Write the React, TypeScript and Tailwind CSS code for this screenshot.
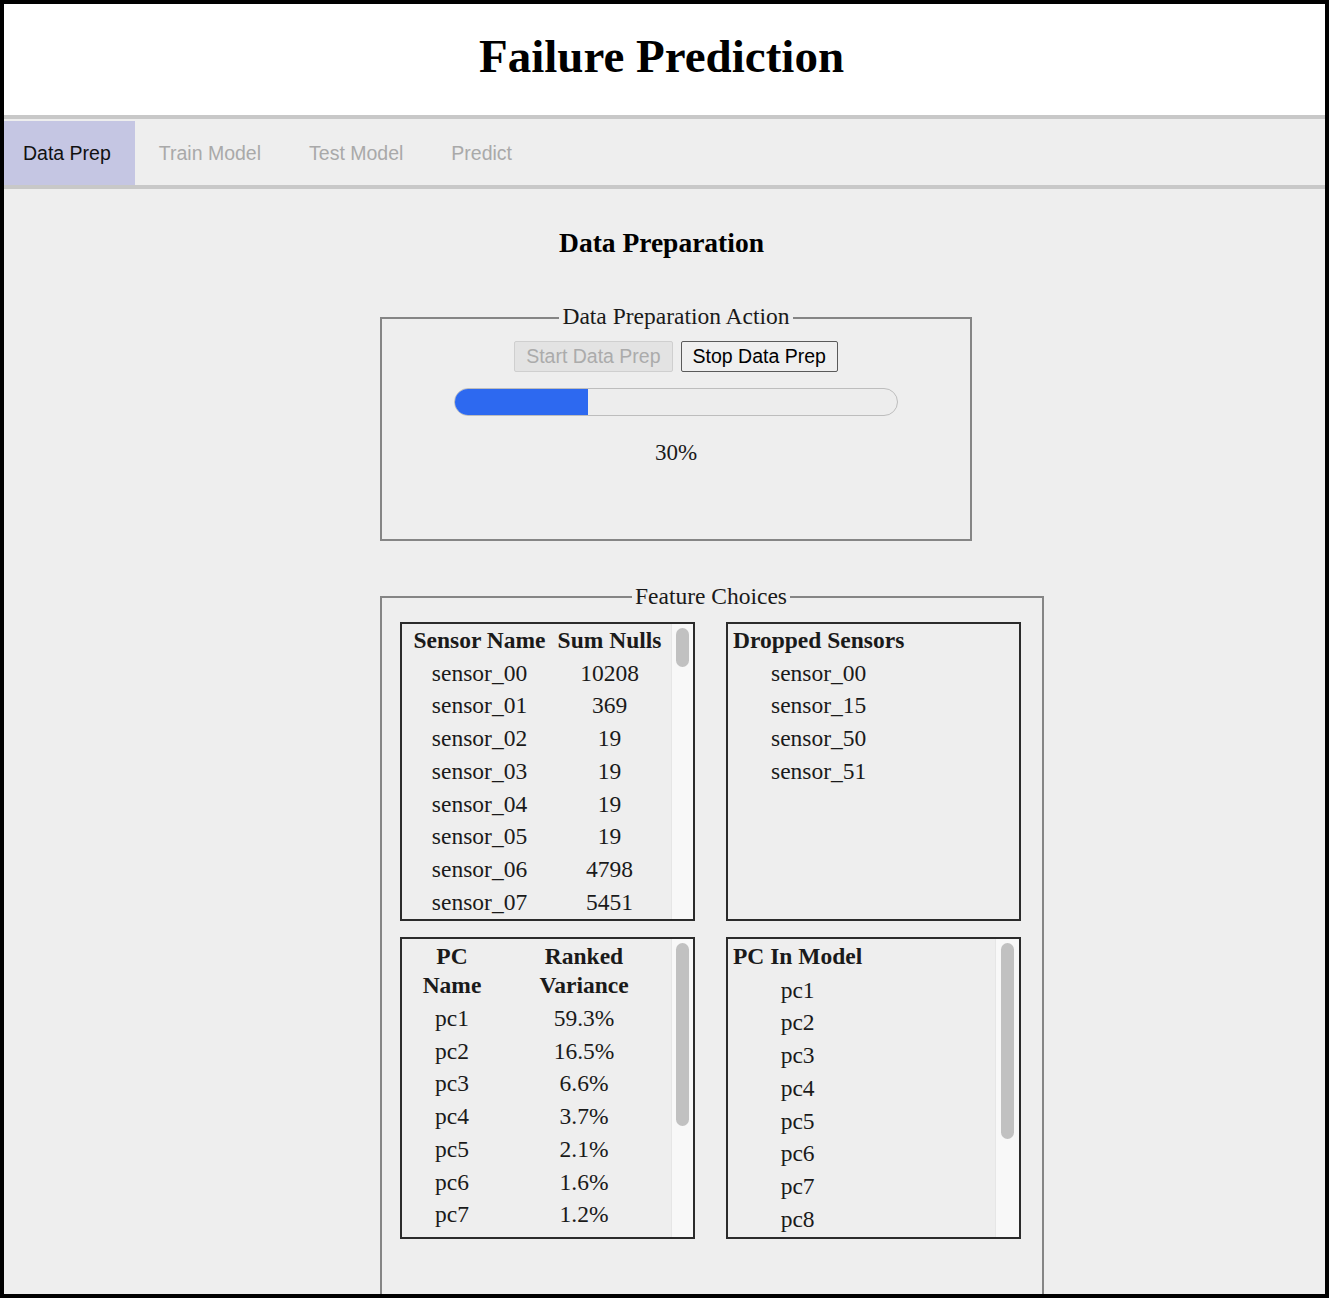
import React from "react";

const serif = "font-['Liberation_Serif',_'Times_New_Roman',_serif]";
const sans = "font-['Liberation_Sans',_Arial,_sans-serif]";

const sensorNulls: [string, string][] = [
  ["sensor_00", "10208"],
  ["sensor_01", "369"],
  ["sensor_02", "19"],
  ["sensor_03", "19"],
  ["sensor_04", "19"],
  ["sensor_05", "19"],
  ["sensor_06", "4798"],
  ["sensor_07", "5451"],
];

const dropped = ["sensor_00", "sensor_15", "sensor_50", "sensor_51"];

const pcVariance: [string, string][] = [
  ["pc1", "59.3%"],
  ["pc2", "16.5%"],
  ["pc3", "6.6%"],
  ["pc4", "3.7%"],
  ["pc5", "2.1%"],
  ["pc6", "1.6%"],
  ["pc7", "1.2%"],
];

const pcInModel = ["pc1", "pc2", "pc3", "pc4", "pc5", "pc6", "pc7", "pc8"];

const tabs = ["Data Prep", "Train Model", "Test Model", "Predict"];

function FakeScrollbar({ width, thumb }: { width: string; thumb: string }) {
  return (
    <div className={`${width} shrink-0 bg-[#f8f8f8] border-l border-[#e6e6e6] flex justify-center pt-[4px]`}>
      <div className={`w-[13px] ${thumb} rounded-full bg-[#c1c1c1]`} />
    </div>
  );
}

function Box({ children, bar }: { children: React.ReactNode; bar?: React.ReactNode }) {
  return (
    <div className="w-[295px] h-full border-2 border-[#2b2b2b] flex overflow-hidden">
      <div className="flex-1 min-w-0 overflow-hidden">{children}</div>
      {bar}
    </div>
  );
}

export default function App() {
  return (
    <div className={`h-[1298px] border-4 border-black bg-[#eeeeee] overflow-hidden text-[#1a1a1a] ${serif}`}>
      {/* header */}
      <div className="h-[111px] bg-white flex items-center justify-center pr-[6px] pb-[6px]">
        <h1 className="text-[47px] font-bold text-black leading-none">Failure Prediction</h1>
      </div>

      {/* tabs */}
      <div className={`border-t-4 border-b-4 border-[#c8c8c8] bg-[#eeeeee] pt-[2px] flex ${sans}`}>
        {tabs.map((t, i) => (
          <div
            key={t}
            className={`h-[64px] flex items-center pt-[2px] text-[19.5px] ${
              i === 0 ? "bg-[#c5c6e3] text-[#111] pl-[19px] pr-[24px]" : "text-[#a9a9a9] px-[24px]"
            }`}
          >
            {t}
          </div>
        ))}
      </div>

      {/* content */}
      <div className="pt-[38px]">
        <h2 className="text-center pr-[6px] text-[27.5px] font-bold leading-[32px] text-black">Data Preparation</h2>

        <div className="pl-[376px] pt-[43px] flex flex-col items-start">
          <fieldset className="w-[592px] border-2 border-[#858585] px-0">
            <legend className="mx-auto px-[3px] pb-[3px] text-[23.5px] leading-[28px]">Data Preparation Action</legend>
            <div className="pt-[8px] pb-[72px] flex flex-col items-center">
              <div className={`flex gap-[8px] ${sans}`}>
                <button className="h-[31px] px-[11px] text-[19.5px] rounded-[2px] border border-[#cfcfcf] bg-[#e3e3e3] text-[#ababab]">
                  Start Data Prep
                </button>
                <button className="h-[31px] px-[11px] text-[19.5px] rounded-[2px] border-[1.5px] border-[#5a5a5a] bg-[#efefef] text-black">
                  Stop Data Prep
                </button>
              </div>
              <div className="mt-[16px] w-[444px] h-[28px] rounded-full border border-[#bdbdbd] bg-[#ededed] overflow-hidden">
                <div className="h-full bg-[#2d69f0]" style={{ width: "30%" }} />
              </div>
              <div className="mt-[23px] text-[23px] leading-[28px]">30%</div>
            </div>
          </fieldset>

          <fieldset className="mt-[41px] w-[664px] border-2 border-[#858585] pl-[18px] pr-[20px] pb-[120px]">
            <legend className="mx-auto px-[3px] pb-[2px] text-[23.5px] leading-[28px]">Feature Choices</legend>
            <div className="pt-[10px] flex flex-col gap-[16px] text-[23.5px]">
              <div className="h-[299px] flex gap-[31px]">
                <Box bar={<FakeScrollbar width="w-[22px]" thumb="h-[39px]" />}>
                  <div className="ml-[6px] grid grid-cols-[143px_117px] text-center leading-[32.7px]">
                    <div className="font-bold">Sensor Name</div>
                    <div className="font-bold">Sum Nulls</div>
                    {sensorNulls.map(([n, v]) => (
                      <React.Fragment key={n}>
                        <div>{n}</div>
                        <div>{v}</div>
                      </React.Fragment>
                    ))}
                  </div>
                </Box>
                <Box>
                  <div className="ml-[5px] w-fit text-center leading-[32.7px]">
                    <div className="font-bold">Dropped Sensors</div>
                    {dropped.map((d) => (
                      <div key={d}>{d}</div>
                    ))}
                  </div>
                </Box>
              </div>

              <div className="h-[302px] flex gap-[31px]">
                <Box bar={<FakeScrollbar width="w-[22px]" thumb="h-[183px]" />}>
                  <div className="ml-[6px] grid grid-cols-[88px_176px] text-center">
                    <div className="font-bold leading-[29px] py-[2.5px]">
                      PC
                      <br />
                      Name
                    </div>
                    <div className="font-bold leading-[29px] py-[2.5px]">
                      Ranked
                      <br />
                      Variance
                    </div>
                    {pcVariance.map(([n, v]) => (
                      <React.Fragment key={n}>
                        <div className="leading-[32.7px]">{n}</div>
                        <div className="leading-[32.7px]">{v}</div>
                      </React.Fragment>
                    ))}
                  </div>
                </Box>
                <Box bar={<FakeScrollbar width="w-[24px]" thumb="h-[196px]" />}>
                  <div className="ml-[5px] w-fit text-center">
                    <div className="font-bold leading-[34.7px]">PC In Model</div>
                    {pcInModel.map((p) => (
                      <div key={p} className="leading-[32.7px]">
                        {p}
                      </div>
                    ))}
                  </div>
                </Box>
              </div>
            </div>
          </fieldset>
        </div>
      </div>
    </div>
  );
}
